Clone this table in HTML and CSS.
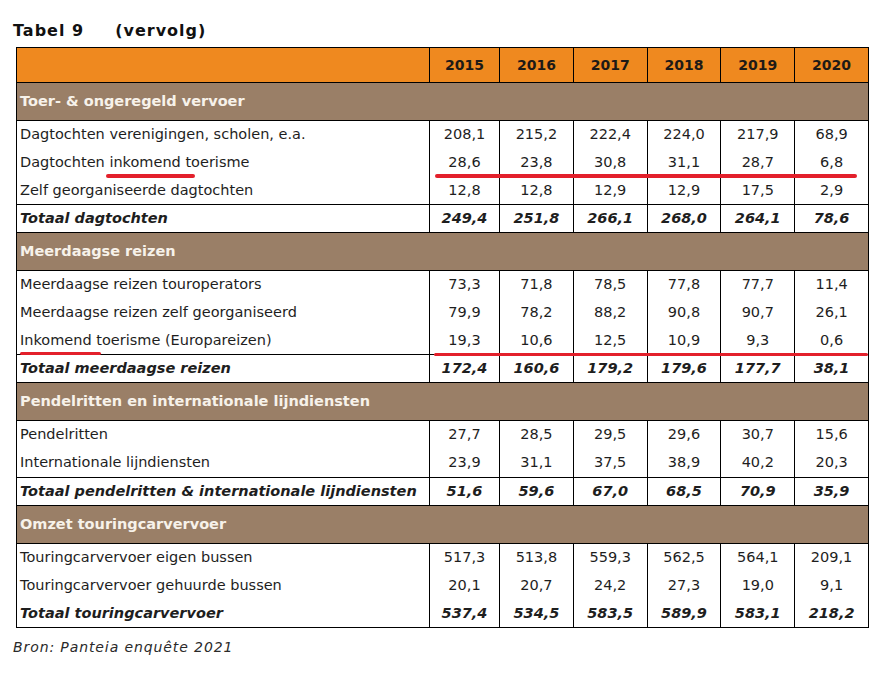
FILE: index.html
```html
<!DOCTYPE html>
<html lang="nl">
<head>
<meta charset="utf-8">
<title>Tabel 9 (vervolg)</title>
<link rel="stylesheet" href="styles.css">
</head>
<body>
<div class="page">
  <h1 class="title"><span>Tabel 9</span><span class="cont">(vervolg)</span></h1>
  <div class="table-wrap">
    <table class="data">
      <colgroup>
        <col class="c-label">
        <col class="c-y1">
        <col class="c-y">
        <col class="c-y">
        <col class="c-y">
        <col class="c-y">
        <col class="c-y">
      </colgroup>
      <thead>
        <tr class="head">
          <th></th><th>2015</th><th>2016</th><th>2017</th><th>2018</th><th>2019</th><th>2020</th>
        </tr>
      </thead>
      <tbody>
        <tr class="section"><td colspan="7">Toer- &amp; ongeregeld vervoer</td></tr>
        <tr class="row"><td>Dagtochten verenigingen, scholen, e.a.</td><td>208,1</td><td>215,2</td><td>222,4</td><td>224,0</td><td>217,9</td><td>68,9</td></tr>
        <tr class="row"><td>Dagtochten <span class="hl hl-a">inkomend</span> toerisme</td><td>28,6</td><td>23,8</td><td>30,8</td><td>31,1</td><td>28,7</td><td>6,8</td></tr>
        <tr class="row"><td>Zelf georganiseerde dagtochten</td><td>12,8</td><td>12,8</td><td>12,9</td><td>12,9</td><td>17,5</td><td>2,9</td></tr>
        <tr class="row total"><td>Totaal dagtochten</td><td>249,4</td><td>251,8</td><td>266,1</td><td>268,0</td><td>264,1</td><td>78,6</td></tr>

        <tr class="section"><td colspan="7">Meerdaagse reizen</td></tr>
        <tr class="row"><td>Meerdaagse reizen touroperators</td><td>73,3</td><td>71,8</td><td>78,5</td><td>77,8</td><td>77,7</td><td>11,4</td></tr>
        <tr class="row"><td>Meerdaagse reizen zelf georganiseerd</td><td>79,9</td><td>78,2</td><td>88,2</td><td>90,8</td><td>90,7</td><td>26,1</td></tr>
        <tr class="row"><td><span class="hl hl-b">Inkomend</span> toerisme (Europareizen)</td><td>19,3</td><td>10,6</td><td>12,5</td><td>10,9</td><td>9,3</td><td>0,6</td></tr>
        <tr class="row total"><td>Totaal meerdaagse reizen</td><td>172,4</td><td>160,6</td><td>179,2</td><td>179,6</td><td>177,7</td><td>38,1</td></tr>

        <tr class="section"><td colspan="7">Pendelritten en internationale lijndiensten</td></tr>
        <tr class="row"><td>Pendelritten</td><td>27,7</td><td>28,5</td><td>29,5</td><td>29,6</td><td>30,7</td><td>15,6</td></tr>
        <tr class="row pair"><td>Internationale lijndiensten</td><td>23,9</td><td>31,1</td><td>37,5</td><td>38,9</td><td>40,2</td><td>20,3</td></tr>
        <tr class="row total"><td>Totaal pendelritten &amp; internationale lijndiensten</td><td>51,6</td><td>59,6</td><td>67,0</td><td>68,5</td><td>70,9</td><td>35,9</td></tr>

        <tr class="section"><td colspan="7">Omzet touringcarvervoer</td></tr>
        <tr class="row"><td>Touringcarvervoer eigen bussen</td><td>517,3</td><td>513,8</td><td>559,3</td><td>562,5</td><td>564,1</td><td>209,1</td></tr>
        <tr class="row"><td>Touringcarvervoer gehuurde bussen</td><td>20,1</td><td>20,7</td><td>24,2</td><td>27,3</td><td>19,0</td><td>9,1</td></tr>
        <tr class="row total last"><td>Totaal touringcarvervoer</td><td>537,4</td><td>534,5</td><td>583,5</td><td>589,9</td><td>583,1</td><td>218,2</td></tr>
      </tbody>
    </table>
    <div class="mark mark-1"></div>
    <div class="mark mark-2"></div>
  </div>
  <p class="source">Bron: Panteia enquête 2021</p>
</div>
</body>
</html>
```

FILE: styles.css
```css
html, body {
  margin: 0;
  padding: 0;
  background: #ffffff;
}

.page {
  padding: 21px 0 0 13px;
  font-family: "DejaVu Sans", Verdana, sans-serif;
  color: #1e1e1e;
}

.title {
  margin: 0 0 7px 0;
  font-size: 16px;
  line-height: 19px;
  font-weight: bold;
  color: #111;
  letter-spacing: 1px;
}

.title .cont {
  margin-left: 31px;
}

.table-wrap {
  position: relative;
  margin-left: 3px;
  width: 852px;
}

.data {
  border-collapse: collapse;
  table-layout: fixed;
  width: 852px;
  font-size: 14.5px;
  line-height: 17px;
}

.c-label { width: 413px; }
.c-y1 { width: 70px; }
.c-y { width: 73.8px; }

.data th,
.data td {
  padding: 0;
  border-left: 1px solid #000;
  border-right: 1px solid #000;
  vertical-align: middle;
}

.head {
  height: 35px;
}

.head th {
  background: #ef891f;
  border: 1px solid #000;
  font-size: 14px;
  font-weight: bold;
  text-align: center;
  color: #1e1a16;
  padding-top: 1px;
}

.section {
  height: 38px;
}

.section td {
  background: #9a7f67;
  border: 1px solid #000;
  color: #f7f2ea;
  font-weight: bold;
  text-align: left;
  padding-left: 3px;
  padding-bottom: 1px;
}

.row {
  height: 28px;
}

.row td {
  text-align: center;
}

.row td:first-child {
  text-align: left;
  padding-left: 3px;
}

.row.pair {
  height: 29px;
}

.total td {
  border-top: 1px solid #000;
  font-weight: bold;
  font-style: italic;
}

.total.last td {
  border-top: none;
  border-bottom: 1px solid #000;
}

.hl {
  position: relative;
}

.hl::after {
  content: "";
  position: absolute;
  height: 4px;
  border-radius: 2px;
  background: #e3202b;
}

.hl-a::after {
  left: -3px;
  right: -14px;
  bottom: -8px;
}

.hl-b::after {
  left: 0;
  right: -9px;
  bottom: -7px;
  height: 3px;
}

.mark {
  position: absolute;
  background: #e3202b;
  border-radius: 2px;
}

.mark-1 {
  left: 419px;
  top: 127px;
  width: 422px;
  height: 4px;
}

.mark-2 {
  left: 418px;
  top: 306px;
  width: 434px;
  height: 3px;
}

.source {
  margin: 10px 0 0 0;
  font-size: 14px;
  line-height: 18px;
  font-style: italic;
  letter-spacing: 0.9px;
  color: #2a2a2a;
}
```
